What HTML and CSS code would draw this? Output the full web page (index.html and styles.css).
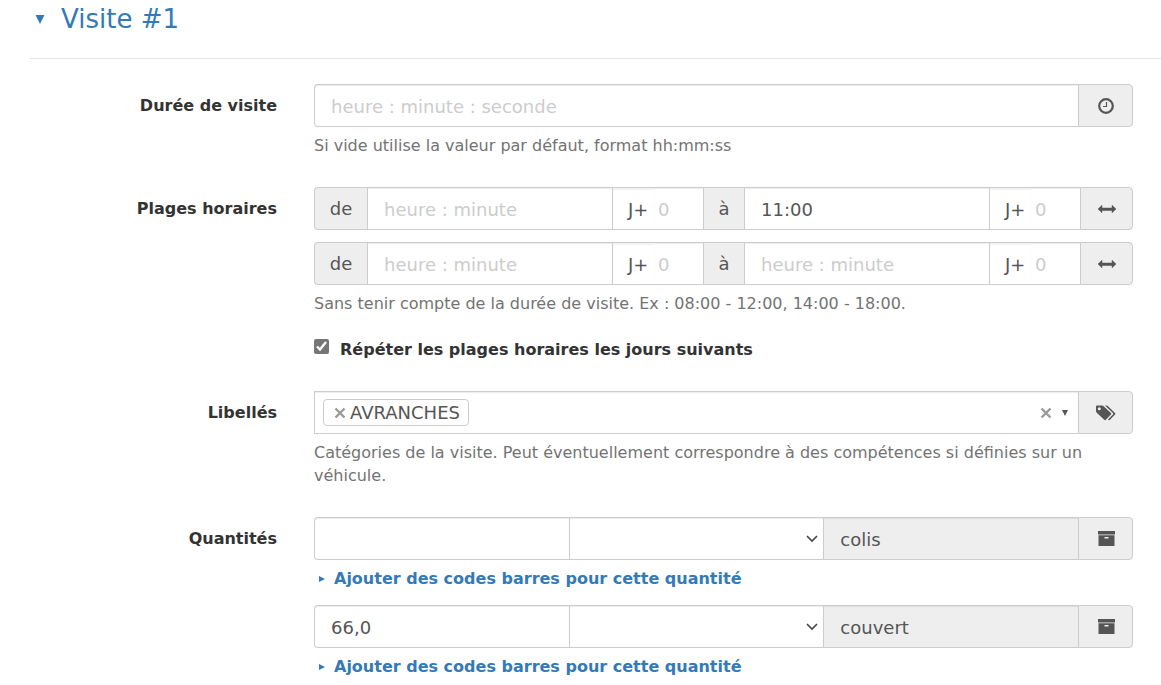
FILE: index.html
```html
<!DOCTYPE html>
<html lang="fr">
<head>
    <meta charset="UTF-8">
    <meta name="viewport" content="width=device-width, initial-scale=1.0">
    <title>Visite #1</title>
    <link rel="stylesheet" href="styles.css">
</head>
<body>
    <!-- Icons -->
    <svg class="sprite" aria-hidden="true">
        <symbol id="icon-clock" viewBox="0 0 18 18">
            <circle cx="9" cy="9" r="6.800" fill="none" stroke="currentColor" stroke-width="2.200"/>
            <path d="M9.500 5v4.500H6" fill="none" stroke="currentColor" stroke-width="1.200"/>
        </symbol>
        <symbol id="icon-arrows" viewBox="0 0 18 18">
            <path d="M0 9l4-3.800V8h10V5.200L18 9l-4 3.800V10.500H4v2.300z" fill="currentColor" stroke="currentColor" stroke-width=".5"/>
        </symbol>
        <symbol id="icon-tags" viewBox="0 0 20 18">
            <path fill-rule="evenodd" d="M0 2.600C0 2 .5 1.500 1.100 1.500H6c.6 0 1.400.4 1.900.9l7 6.500c.5.500.5 1.200 0 1.700l-5 5.200c-.5.500-1.200.5-1.700 0L1 9C.5 8.500 0 7.700 0 7.100zM3.300 3.200a1.500 1.500 0 1 0 0 3 1.500 1.500 0 0 0 0-3z" fill="currentColor"/>
            <path d="M9 1.500h1.500c.6 0 1.300.4 1.800.9l6.700 6.500c.5.500.5 1.200 0 1.700l-5 5.200c-.6.600-1.400.4-2-.3l4.900-4.900c.5-.5.500-1.200 0-1.700z" fill="currentColor"/>
        </symbol>
        <symbol id="icon-archive" viewBox="0 0 18 18">
            <path d="M1 1h17v3.500H1z" fill="currentColor"/>
            <path fill-rule="evenodd" d="M1.500 5.200h16V16h-16zM7.500 7v1.500h4V7z" fill="currentColor"/>
        </symbol>
        <symbol id="icon-cross" viewBox="0 0 12 12">
            <path d="M1.500 1.500l9 9M10.500 1.500l-9 9" fill="none" stroke="currentColor" stroke-width="2.400"/>
        </symbol>
        <symbol id="icon-down" viewBox="0 0 10 10">
            <path d="M0 0h10L5 10z" fill="currentColor"/>
        </symbol>
        <symbol id="icon-right" viewBox="0 0 10 10">
            <path d="M0 0l10 5-10 5z" fill="currentColor"/>
        </symbol>
    </svg>

    <form class="visit">
        <h2 class="visit-title"><a href="#visite-1"><svg class="caret"><use href="#icon-down"/></svg>Visite #1</a></h2>

        <div class="form-body" id="visite-1">
            <div class="form-group">
                <label class="control-label" for="duration">Durée de visite</label>
                <div class="controls">
                    <div class="input-group">
                        <input class="form-control" type="text" id="duration" placeholder="heure : minute : seconde">
                        <span class="addon icon-addon"><svg class="icon"><use href="#icon-clock"/></svg></span>
                    </div>
                    <p class="help">Si vide utilise la valeur par défaut, format hh:mm:ss</p>
                </div>
            </div>

            <div class="form-group">
                <label class="control-label" for="start-1">Plages horaires</label>
                <div class="controls">
                    <div class="input-group">
                        <label class="addon" for="start-1">de</label>
                        <input class="form-control" type="text" id="start-1" placeholder="heure : minute">
                        <label class="day-label" for="start-day-1">J+</label>
                        <input class="form-control day" type="text" id="start-day-1" placeholder="0">
                        <label class="addon to" for="end-1">à</label>
                        <input class="form-control" type="text" id="end-1" placeholder="heure : minute" value="11:00">
                        <label class="day-label" for="end-day-1">J+</label>
                        <input class="form-control day" type="text" id="end-day-1" placeholder="0">
                        <span class="addon"><svg class="icon"><use href="#icon-arrows"/></svg></span>
                    </div>
                    <div class="input-group stacked">
                        <label class="addon" for="start-2">de</label>
                        <input class="form-control" type="text" id="start-2" placeholder="heure : minute">
                        <label class="day-label" for="start-day-2">J+</label>
                        <input class="form-control day" type="text" id="start-day-2" placeholder="0">
                        <label class="addon to" for="end-2">à</label>
                        <input class="form-control" type="text" id="end-2" placeholder="heure : minute">
                        <label class="day-label" for="end-day-2">J+</label>
                        <input class="form-control day" type="text" id="end-day-2" placeholder="0">
                        <span class="addon"><svg class="icon"><use href="#icon-arrows"/></svg></span>
                    </div>
                    <p class="help">Sans tenir compte de la durée de visite. Ex : 08:00 - 12:00, 14:00 - 18:00.</p>
                    <div class="checkbox">
                        <input type="checkbox" id="repeat" checked>
                        <label for="repeat">Répéter les plages horaires les jours suivants</label>
                    </div>
                </div>
            </div>

            <div class="form-group">
                <label class="control-label" for="tags">Libellés</label>
                <div class="controls">
                    <div class="input-group">
                        <div class="form-control tag-box">
                            <span class="tag"><button class="clear" type="button" aria-label="Retirer AVRANCHES"><svg class="cross"><use href="#icon-cross"/></svg></button>AVRANCHES</span>
                            <input class="tag-search" type="text" id="tags">
                            <button class="clear" type="button" aria-label="Tout retirer"><svg class="cross"><use href="#icon-cross"/></svg></button>
                            <svg class="tag-caret"><use href="#icon-down"/></svg>
                        </div>
                        <span class="addon icon-addon"><svg class="icon tags-icon"><use href="#icon-tags"/></svg></span>
                    </div>
                    <p class="help">Catégories de la visite. Peut éventuellement correspondre à des compétences si définies sur un véhicule.</p>
                </div>
            </div>

            <div class="form-group">
                <label class="control-label" for="quantity-1">Quantités</label>
                <div class="controls">
                    <div class="input-group">
                        <input class="form-control" type="text" id="quantity-1">
                        <select class="form-control" aria-label="Opération colis"><option></option></select>
                        <input class="form-control" type="text" aria-label="Unité" value="colis" disabled>
                        <span class="addon icon-addon"><svg class="icon"><use href="#icon-archive"/></svg></span>
                    </div>
                    <a class="barcodes" href="#codes-1"><svg class="bullet"><use href="#icon-right"/></svg>Ajouter des codes barres pour cette quantité</a>
                    <div class="input-group">
                        <input class="form-control" type="text" aria-label="Quantité couvert" value="66,0">
                        <select class="form-control" aria-label="Opération couvert"><option></option></select>
                        <input class="form-control" type="text" aria-label="Unité" value="couvert" disabled>
                        <span class="addon icon-addon"><svg class="icon"><use href="#icon-archive"/></svg></span>
                    </div>
                    <a class="barcodes" href="#codes-2"><svg class="bullet"><use href="#icon-right"/></svg>Ajouter des codes barres pour cette quantité</a>
                </div>
            </div>
        </div>
    </form>
</body>
</html>
```
FILE: styles.css
```css
* {
    box-sizing: border-box;
}
body {
    margin: 0;
    background: #fff;
    color: #333;
    font-family: Verdana, "DejaVu Sans", sans-serif;
    font-size: 16px;
    line-height: 23px;
}
.sprite {
    display: none;
}
a {
    color: #337ab7;
    text-decoration: none;
}
a:hover {
    text-decoration: underline;
}
.visit {
    padding-left: 29px;
}
.visit-title {
    margin: 0;
    padding: 4px 6px 24px;
    border-bottom: 1px solid #e5e5e5;
    font-size: 26px;
    font-weight: normal;
    line-height: 30px;
}
.visit-title a {
    display: flex;
    align-items: center;
    gap: 16px;
}
.caret {
    width: 10px;
    height: 9px;
}
.form-body {
    padding: 25px 28px 0 0;
}
.form-group {
    display: grid;
    grid-template-columns: minmax(0, 248fr) minmax(0, 819fr);
    gap: 37px;
    margin-bottom: 30px;
}
.form-group:last-child {
    margin-bottom: 0;
}
.control-label {
    padding-top: 10px;
    text-align: right;
    font-weight: bold;
}
.input-group {
    display: flex;
    height: 43px;
    font-size: 18px;
    color: #555;
}
.stacked {
    margin-top: 12px;
}
.form-control {
    flex: 1 1 40px;
    min-width: 0;
    height: 43px;
    margin: 0;
    padding: 2px 16px 0;
    border: 1px solid #ccc;
    border-right: none;
    border-radius: 0;
    background: #fff;
    box-shadow: inset 0 1px 1px rgba(0, 0, 0, 0.075);
    color: #555;
    font: inherit;
}
select.form-control {
    appearance: none;
    background: #fff url("data:image/svg+xml,%3Csvg xmlns='http://www.w3.org/2000/svg' width='12' height='8'%3E%3Cpath d='M1 1l5 5 5-5' fill='none' stroke='%23444' stroke-width='1.600'/%3E%3C/svg%3E") no-repeat right 5px center;
}
.form-control:disabled {
    background: #eee;
}
.form-control::placeholder {
    color: #ccc;
}
.addon {
    display: flex;
    align-items: center;
    justify-content: center;
    flex: none;
    width: 53px;
    border: 1px solid #ccc;
    background: #eee;
}
.icon-addon {
    width: 55px;
}
.input-group > :first-child {
    border-radius: 4px 0 0 4px;
}
.input-group > :last-child {
    border-radius: 0 4px 4px 0;
}
.input-group > .tag-box {
    border-radius: 0;
}
label.addon {
    border-right: none;
}
.addon.to {
    width: 41px;
}
.day-label {
    display: flex;
    align-items: center;
    flex: none;
    width: 42px;
    padding: 2px 0 0 15px;
    border: 1px solid #ccc;
    border-right: none;
    box-shadow: inset 0 2px 1px rgba(0, 0, 0, 0.05);
}
.form-control.day {
    flex: none;
    width: 49px;
    padding: 2px 4px 0;
    border-left: none;
}
.icon {
    width: 18px;
    height: 18px;
}
.tags-icon {
    width: 20px;
}
.help {
    margin: 7px 0 0;
    color: #737373;
}
.checkbox {
    display: flex;
    align-items: flex-start;
    gap: 11px;
    margin-top: 23px;
    font-weight: bold;
}
.checkbox input {
    width: 15px;
    height: 15px;
    margin: 1px 0 0;
    accent-color: #767676;
}
.tag-box {
    display: flex;
    align-items: center;
    padding: 0 8px;
}
.tag {
    display: flex;
    align-items: center;
    gap: 4px;
    height: 27px;
    padding: 0 8px 0 10px;
    border: 1px solid #ccc;
    border-radius: 4px;
}
.tag-search {
    flex: 1;
    min-width: 0;
    border: none;
    background: none;
    font: inherit;
    outline: none;
}
.clear {
    display: flex;
    padding: 0;
    border: none;
    background: none;
    color: #999;
    cursor: pointer;
}
.cross {
    width: 12px;
    height: 12px;
}
.tag-caret {
    width: 6px;
    height: 6px;
    margin: 0 2px 0 10px;
}
.barcodes {
    display: flex;
    align-items: center;
    gap: 9px;
    margin: 7px 0 15px;
    padding-left: 5px;
    font-weight: bold;
}
.barcodes:last-child {
    margin-bottom: 0;
}
.bullet {
    width: 6px;
    height: 6px;
}
```
